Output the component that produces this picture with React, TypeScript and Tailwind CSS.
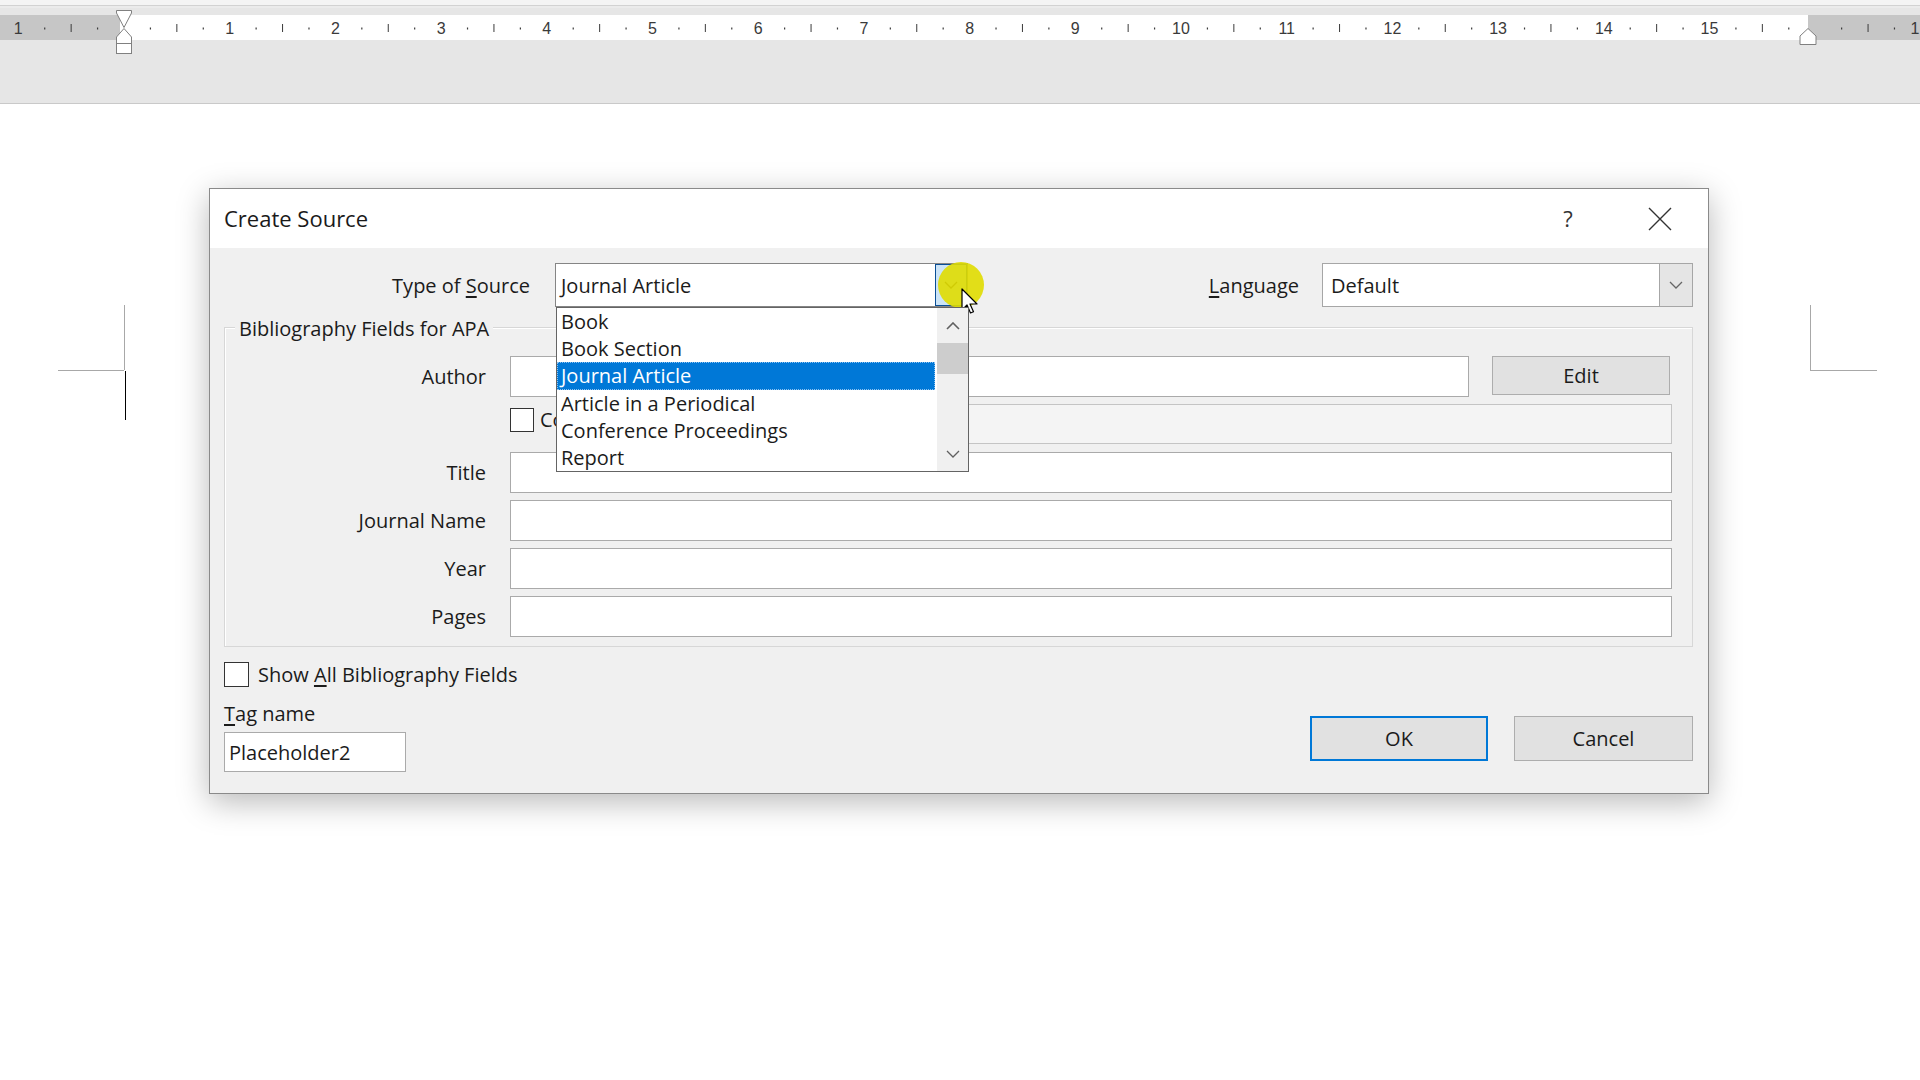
import React from "react";

const STEP = 105.7 / 4;

function Ruler() {
  const marks: React.ReactNode[] = [];
  for (let k = -4; k <= 68; k++) {
    if (k === 0) continue;
    const x = 124 + k * STEP;
    const m = ((k % 4) + 4) % 4;
    if (m === 0) {
      const n = Math.abs(k / 4);
      if (n === 16) continue; // hidden under the right margin marker
      const label = n === 17 ? "1" : String(n);
      const lx = n === 17 ? 1915 : x;
      marks.push(
        <text
          key={k}
          x={lx}
          y={34}
          textAnchor="middle"
          fontSize={16}
          fill="#3a3a3a"
          fontFamily="'Liberation Sans', Arial, sans-serif"
        >
          {label}
        </text>
      );
    } else if (m === 2) {
      marks.push(<line key={k} x1={x} x2={x} y1={24} y2={32} stroke="#3a3a3a" strokeWidth={1} />);
    } else {
      marks.push(<rect key={k} x={x - 0.6} y={27.5} width={1.2} height={2} fill="#3a3a3a" />);
    }
  }
  return (
    <svg width={1920} height={48} viewBox="0 8 1920 48" className="block">
      <rect x={0} y={15} width={1920} height={25} fill="#ffffff" />
      <rect x={0} y={15} width={120} height={25} fill="#c6c6c6" />
      <rect x={1808} y={15} width={112} height={25} fill="#c6c6c6" />
      {marks}
      {/* left indent marker */}
      <path d="M116.5 10.5 H131.5 V13 L124 27.5 L116.5 13 Z" fill="#fff" stroke="#808080" />
      <path d="M124 28.5 L131.5 37 V43.5 H116.5 V37 Z" fill="#fff" stroke="#808080" />
      <rect x={116.5} y={43.5} width={15} height={10} fill="#fff" stroke="#808080" />
      {/* right indent marker */}
      <path d="M1808 28.5 L1816 36 V44.5 H1800 V36 Z" fill="#fff" stroke="#808080" />
    </svg>
  );
}

function ChevronDown({ color = "#555" }: { color?: string }) {
  return (
    <svg width={14} height={8} viewBox="0 0 14 8">
      <polyline points="1,1 7,7 13,1" fill="none" stroke={color} strokeWidth={1.3} />
    </svg>
  );
}

function ChevronUp({ color = "#555" }: { color?: string }) {
  return (
    <svg width={14} height={8} viewBox="0 0 14 8">
      <polyline points="1,7 7,1 13,7" fill="none" stroke={color} strokeWidth={1.6} />
    </svg>
  );
}

function Checkbox({ size = 24 }: { size?: number }) {
  return (
    <div
      className={
        size === 24
          ? "h-[24px] w-[24px] shrink-0 border border-[#333] bg-white"
          : "h-[25px] w-[25px] shrink-0 border border-[#333] bg-white"
      }
    />
  );
}

const SOURCE_TYPES = [
  "Book",
  "Book Section",
  "Journal Article",
  "Article in a Periodical",
  "Conference Proceedings",
  "Report",
];

function SourceList() {
  return (
    <div className="absolute left-0 top-[43px] z-10 flex h-[165px] w-[413px] border border-[#646464] bg-white">
      <div className="mr-[2px] flex w-[378px] flex-col">
        {SOURCE_TYPES.map((t) =>
          t === "Journal Article" ? (
            <div
              key={t}
              className="flex h-[27.3px] items-center border border-dotted border-[#8cc2f2] bg-[#0078d7] pl-[3px] text-white"
            >
              {t}
            </div>
          ) : (
            <div key={t} className="flex h-[27.3px] items-center pl-[4px]">
              {t}
            </div>
          )
        )}
      </div>
      <div className="flex w-[31px] flex-col bg-[#f0f0f0]">
        <div className="flex h-[35px] items-center justify-center">
          <ChevronUp color="#606060" />
        </div>
        <div className="h-[31px] bg-[#cdcdcd]" />
        <div className="flex-1" />
        <div className="flex h-[35px] items-center justify-center">
          <ChevronDown color="#606060" />
        </div>
      </div>
    </div>
  );
}

function Field({ className = "" }: { className?: string }) {
  return <div className={"h-[41px] border border-[#aaaaaa] bg-white " + className} />;
}

export default function App() {
  return (
    <div className="h-[1080px] w-[1920px] overflow-hidden bg-white font-['Open_Sans','Noto_Sans',sans-serif] text-[20px] leading-[27px] text-[#1b1b1b]">
      {/* ribbon bottom + ruler */}
      <header className="h-[104px] border-b border-[#c9c9c9] bg-[#e6e6e6]">
        <div className="h-[6px] border-b border-[#d2d2d2] bg-[#f4f4f4]" />
        <div className="h-[2px] bg-[#ebebeb]" />
        <Ruler />
      </header>

      {/* document page */}
      <main className="relative h-[976px] bg-white pl-[209px] pt-[84px]">
        {/* crop marks + caret */}
        <div className="absolute left-[124px] top-[201px] h-[65px] w-px bg-[#a8a8a8]" />
        <div className="absolute left-[58px] top-[266px] h-px w-[66px] bg-[#a8a8a8]" />
        <div className="absolute left-[125px] top-[267px] h-[49px] w-px bg-black" />
        <div className="absolute left-[1810px] top-[201px] h-[65px] w-px bg-[#a8a8a8]" />
        <div className="absolute left-[1810px] top-[266px] h-px w-[67px] bg-[#a8a8a8]" />

        {/* Create Source dialog */}
        <div className="relative h-[606px] w-[1500px] border border-[#8a8a8a] bg-[#f0f0f0] shadow-[0_8px_30px_rgba(0,0,0,0.28)]">
          <div className="flex h-[59px] items-center bg-white pl-[14px] pr-[25px]">
            <span className="text-[22px] text-[#1a1a1a]">Create Source</span>
            <div className="flex-1" />
            <div className="flex gap-[46px]">
              <div className="flex h-[40px] w-[46px] items-center justify-center text-[22px] text-[#333]">?</div>
              <div className="flex h-[40px] w-[46px] items-center justify-center">
                <svg width={24} height={24} viewBox="0 0 24 24">
                  <path d="M1 1 L23 23 M23 1 L1 23" stroke="#333" strokeWidth={1.4} />
                </svg>
              </div>
            </div>
          </div>

          <div className="pl-[14px] pr-[15px] pt-[15px]">
            {/* type of source + language */}
            <div className="flex h-[44px] items-center">
              <div className="w-[306px] text-right">
                Type of <span className="underline underline-offset-[3px]">S</span>ource
              </div>
              <div className="relative ml-[25px] flex h-[44px] w-[413px] border border-[#858585] bg-white">
                <div className="flex flex-1 items-center pl-[5px]">Journal Article</div>
                <div className="flex w-[32px] items-center justify-center border border-[#0a4f96] bg-[#cce4f7]">
                  <ChevronDown color="#333" />
                </div>
                {/* mouse highlight + pointer */}
                <div className="absolute left-[382px] top-[-2px] h-[46px] w-[46px] rounded-full bg-[rgba(224,220,0,0.9)]" />
                <svg className="absolute left-[405px] top-[24px]" width={20} height={28} viewBox="0 0 20 28">
                  <path
                    d="M1 1 L1 22 L6 17 L9.5 25 L12.5 23.8 L9 16 L16 16 Z"
                    fill="#fff"
                    stroke="#000"
                    strokeWidth={1.2}
                    strokeLinejoin="round"
                  />
                </svg>
                <SourceList />
              </div>
              <div className="flex-1" />
              <div>
                <span className="underline underline-offset-[3px]">L</span>anguage
              </div>
              <div className="ml-[23px] flex h-[44px] w-[371px] border border-[#a6a6a6] bg-white">
                <div className="flex flex-1 items-center pl-[8px]">Default</div>
                <div className="flex w-[33px] items-center justify-center border-l border-[#a6a6a6] bg-[#e5e5e5]">
                  <ChevronDown color="#666" />
                </div>
              </div>
            </div>

            {/* bibliography fields group */}
            <div className="relative mt-[20px] border border-[#d7d7d7] pb-[9px] pr-[20px] pt-[28px] shadow-[inset_1px_1px_0_#ffffff]">
              <span className="absolute left-[10px] top-[-13px] bg-[#f0f0f0] px-[4px]">
                Bibliography Fields for APA
              </span>
              <div className="grid grid-cols-[261px_1fr] gap-x-[24px] gap-y-[7px]">
                <div className="flex h-[41px] items-center justify-end">Author</div>
                <div className="flex items-center">
                  <Field className="flex-1" />
                  <button className="ml-[23px] mr-[2px] h-[39px] w-[178px] self-start border border-[#adadad] bg-[#e1e1e1]">
                    Edit
                  </button>
                </div>

                <div />
                <div className="flex h-[41px] items-start">
                  <div className="mt-[4px]">
                    <Checkbox />
                  </div>
                  {/* runs under the open list; only its first letter shows */}
                  <span className="ml-[6px] mt-[2px] whitespace-nowrap">Corporate Author</span>
                  <div className="ml-[20px] h-[40px] flex-1 border border-[#c4c4c4] bg-[#f4f4f4]" />
                </div>

                <div className="flex h-[41px] items-center justify-end">Title</div>
                <Field />
                <div className="flex h-[41px] items-center justify-end">Journal Name</div>
                <Field />
                <div className="flex h-[41px] items-center justify-end">Year</div>
                <Field />
                <div className="flex h-[41px] items-center justify-end">Pages</div>
                <Field />
              </div>
            </div>

            {/* bottom area */}
            <div className="mt-[15px] flex items-end justify-between">
              <div className="flex flex-col">
                <div className="flex h-[25px] items-center">
                  <Checkbox size={25} />
                  <span className="ml-[9px]">
                    Show <span className="underline underline-offset-[3px]">A</span>ll Bibliography Fields
                  </span>
                </div>
                <div className="mt-[13px]">
                  <span className="underline underline-offset-[3px]">T</span>ag name
                </div>
                <div className="mt-[5px] flex h-[40px] w-[182px] items-center border border-[#aaaaaa] bg-white pl-[4px]">
                  Placeholder2
                </div>
              </div>
              <div className="mb-[11px] flex gap-[26px]">
                <button className="h-[45px] w-[178px] border-2 border-[#0078d7] bg-[#e1e1e1]">OK</button>
                <button className="h-[45px] w-[179px] border border-[#adadad] bg-[#e1e1e1]">Cancel</button>
              </div>
            </div>
          </div>
        </div>
      </main>
    </div>
  );
}
